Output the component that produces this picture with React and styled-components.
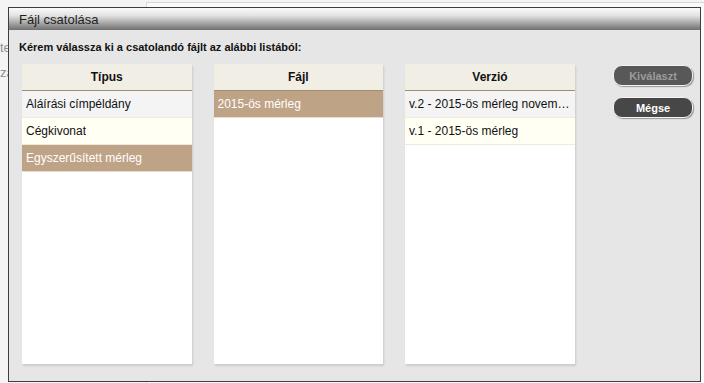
import React from "react";
import styled, { createGlobalStyle } from "styled-components";

const Global = createGlobalStyle`
  html, body { margin: 0; padding: 0; }
  body { font-family: "Liberation Sans", Arial, sans-serif; background: #f4f4f4; }
  * { box-sizing: border-box; }
`;

const Page = styled.div`
  position: relative;
  width: 704px;
  height: 383px;
  overflow: hidden;
  display: flex;
  background: #f4f4f4;
`;

const Sidebar = styled.div`
  width: 146px;
  padding-top: 38px;
  display: flex;
  flex-direction: column;
  gap: 6px;
`;

const SideText = styled.div`
  font-size: 13px;
  color: #8f8f8f;
  height: 19px;
  line-height: 19px;
`;

const ContentPanel = styled.div`
  flex: 1;
  margin-top: 2px;
  background: #fbfbfb;
  border-top: 1px solid #d8d8d8;
  border-left: 1px solid #d8d8d8;
`;

const Dialog = styled.div`
  position: absolute;
  left: 8px;
  top: 7px;
  width: 693px;
  height: 375px;
  border: 1px solid #3e3e3e;
  background: #e6e6e6;
  display: flex;
  flex-direction: column;
`;

const TitleBar = styled.div`
  height: 22px;
  flex: none;
  padding-left: 10px;
  display: flex;
  align-items: center;
  font-size: 13px;
  color: #1e1e1e;
  background: linear-gradient(to bottom, #fafafa 0%, #e2e2e2 35%, #a4a4a4 70%, #707070 100%);
`;

const Body = styled.div`
  flex: 1;
  padding: 9px 7px 17px 13px;
  display: flex;
  flex-direction: column;
`;

const Prompt = styled.div`
  font-size: 11px;
  font-weight: bold;
  color: #111;
  margin-left: -3px;
  height: 16px;
  line-height: 16px;
`;

const Main = styled.div`
  flex: 1;
  margin-top: 9px;
  display: flex;
  gap: 22px;
`;

const Column = styled.div`
  width: 170px;
  background: #ffffff;
  box-shadow: 1px 2px 2px rgba(0, 0, 0, 0.12);
  display: flex;
  flex-direction: column;
`;

const Header = styled.div`
  height: 27px;
  flex: none;
  background: #f1eee6;
  border-bottom: 1px solid #9c8f6c;
  display: flex;
  align-items: center;
  justify-content: center;
  font-size: 12px;
  font-weight: bold;
  color: #111;
`;

const Row = styled.div`
  height: 27px;
  flex: none;
  padding: 0 4px;
  display: flex;
  align-items: center;
  font-size: 12px;
  white-space: nowrap;
  overflow: hidden;
  color: ${(p) => (p.$selected ? "#ffffff" : "#111")};
  background: ${(p) =>
    p.$selected ? "#bfa386" : p.$tone === "grey" ? "#f4f4f4" : "#fffff4"};
  border-bottom: 1px solid ${(p) => (p.$selected ? "#e8dccd" : "#eeeadd")};
`;

const RowText = styled.span`
  overflow: hidden;
  text-overflow: ellipsis;
  white-space: nowrap;
`;

const Buttons = styled.div`
  margin-left: 16px;
  padding-top: 1px;
  display: flex;
  flex-direction: column;
  gap: 11px;
`;

const Button = styled.button`
  width: 80px;
  height: 21px;
  border-radius: 9px;
  border: 1px solid #f4f4f4;
  box-shadow: 1px 1px 1px rgba(0, 0, 0, 0.35);
  background: ${(p) => (p.disabled ? "#585858" : "#474747")};
  color: ${(p) => (p.disabled ? "#9c9c9c" : "#ffffff")};
  font-family: "Liberation Sans", Arial, sans-serif;
  font-size: 11px;
  font-weight: bold;
  padding: 0;
  cursor: pointer;
`;

const columns = [
  {
    title: "Típus",
    rows: [
      { text: "Aláírási címpéldány", tone: "grey" },
      { text: "Cégkivonat", tone: "cream" },
      { text: "Egyszerűsített mérleg", selected: true },
    ],
  },
  {
    title: "Fájl",
    rows: [{ text: "2015-ös mérleg", selected: true }],
  },
  {
    title: "Verzió",
    rows: [
      { text: "v.2 - 2015-ös mérleg november", tone: "grey" },
      { text: "v.1 - 2015-ös mérleg", tone: "cream" },
    ],
  },
];

export default function App() {
  return (
    <>
      <Global />
      <Page>
        <Sidebar>
          <SideText>te</SideText>
          <SideText>zá</SideText>
        </Sidebar>
        <ContentPanel />
        <Dialog>
          <TitleBar>Fájl csatolása</TitleBar>
          <Body>
            <Prompt>Kérem válassza ki a csatolandó fájlt az alábbi listából:</Prompt>
            <Main>
              {columns.map((c) => (
                <Column key={c.title}>
                  <Header>{c.title}</Header>
                  {c.rows.map((r) => (
                    <Row key={r.text} $selected={r.selected} $tone={r.tone}>
                      <RowText>{r.text}</RowText>
                    </Row>
                  ))}
                </Column>
              ))}
              <Buttons>
                <Button disabled>Kiválaszt</Button>
                <Button>Mégse</Button>
              </Buttons>
            </Main>
          </Body>
        </Dialog>
      </Page>
    </>
  );
}
